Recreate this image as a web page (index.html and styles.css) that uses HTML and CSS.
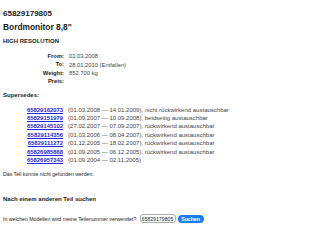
FILE: index.html
```html
<!DOCTYPE html>
<html lang="de">
<head>
    <meta charset="UTF-8">
    <title>65829179805 Bordmonitor 8,8"</title>
    <link rel="stylesheet" href="styles.css">
</head>
<body>
    <h1 class="part-no">65829179805</h1>
    <h2 class="part-name">Bordmonitor 8,8"</h2>
    <h3 class="part-variant">HIGH RESOLUTION</h3>

    <table class="details">
        <tr><th>From:</th><td>01.03.2008</td></tr>
        <tr><th>To:</th><td>28.01.2010 (Entfallen)</td></tr>
        <tr><th>Weight:</th><td>852.700 kg</td></tr>
        <tr><th>Preis:</th><td></td></tr>
    </table>

    <h4 class="section">Supersedes:</h4>
    <table class="supersedes">
        <tr><td><a href="#">65829162073</a></td><td>(01.03.2008 — 14.01.2009), nicht rückwirkend austauschbar</td></tr>
        <tr><td><a href="#">65829151979</a></td><td>(01.09.2007 — 10.09.2008), beidseitig austauschbar</td></tr>
        <tr><td><a href="#">65829145102</a></td><td>(27.02.2007 — 07.09.2007), rückwirkend austauschbar</td></tr>
        <tr><td><a href="#">65829114356</a></td><td>(01.03.2006 — 08.04.2007), rückwirkend austauschbar</td></tr>
        <tr><td><a href="#">65829111272</a></td><td>(01.12.2005 — 18.02.2007), rückwirkend austauschbar</td></tr>
        <tr><td><a href="#">65826985868</a></td><td>(01.09.2005 — 06.12.2005), rückwirkend austauschbar</td></tr>
        <tr><td><a href="#">65826957343</a></td><td>(01.09.2004 — 02.11.2005)</td></tr>
    </table>

    <p class="note">Das Teil konnte nicht gefunden werden.</p>

    <h4 class="section search-title">Nach einem anderen Teil suchen</h4>
    <form class="search" onsubmit="return false">
        <label for="partno">In welchen Modellen wird meine Teilenummer verwendet?:</label>
        <input type="text" id="partno" value="65829179805">
        <button type="submit">Suchen</button>
    </form>
</body>
</html>
```

FILE: styles.css
```css
body {
    font-family: "Liberation Sans", Arial, sans-serif;
    font-size: 5.8px;
    color: #222;
    background: #fff;
    margin: 0;
    padding: 0 3px;
}
h1, h2, h3, h4, p {
    margin: 0;
}
.part-no {
    font-size: 8px;
    margin-top: 9px;
    line-height: 10px;
}
.part-name {
    font-size: 8.4px;
    margin-top: 3px;
    line-height: 10px;
}
.part-variant {
    font-size: 6px;
    margin-top: 5px;
    line-height: 8px;
}
table {
    border-collapse: collapse;
}
td, th {
    padding: 0;
}
.details {
    margin-top: 7px;
}
.details th {
    width: 61px;
    text-align: right;
    padding-right: 5px;
    line-height: 8.4px;
}
.details td {
    color: #444;
}
.section {
    font-size: 6px;
    line-height: 8px;
    margin-top: 5px;
}
.supersedes {
    margin-top: 7px;
    margin-left: 24px;
    font-size: 6px;
}
.supersedes td {
    line-height: 8.4px;
    color: #444;
}
.supersedes td:first-child {
    padding-right: 5px;
    text-align: right;
}
.supersedes a {
    color: #2424e0;
    font-weight: bold;
    font-size: 5.9px;
}
.note {
    font-size: 5.2px;
    margin-top: 6px;
    line-height: 8px;
}
.search-title {
    margin-top: 16.5px;
}
.search {
    font-size: 5.2px;
    margin-top: 11.5px;
    display: flex;
    align-items: center;
    gap: 2px;
}
.search input {
    font: inherit;
    color: #222;
    width: 36px;
    height: 9px;
    padding: 0 1px;
    border: 1px solid #aaa;
    border-radius: 3px;
    box-sizing: border-box;
}
.search button {
    font: inherit;
    font-weight: bold;
    color: #fff;
    background: #1a7ff2;
    border: none;
    border-radius: 5px;
    height: 8px;
    width: 26px;
    padding: 0;
}
```
